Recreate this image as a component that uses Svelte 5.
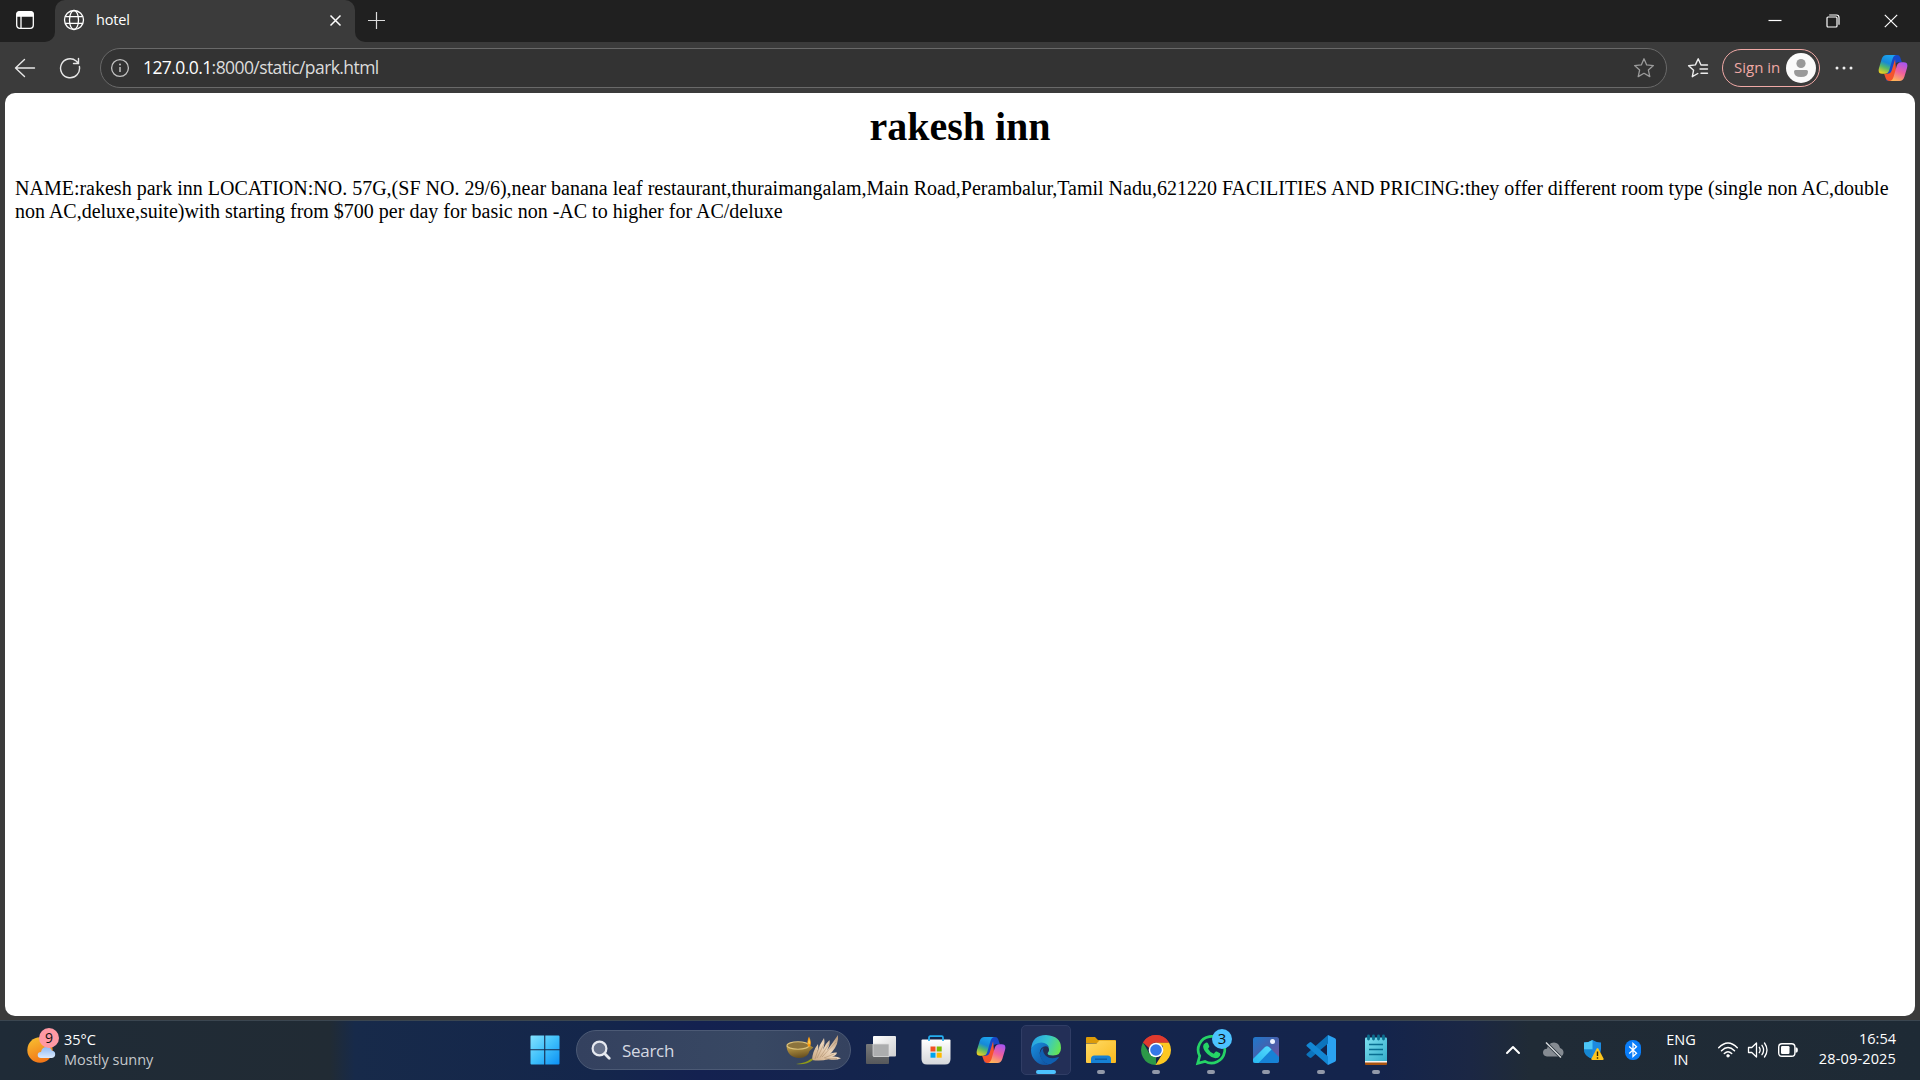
<script>
  const url = { host: '127.0.0.1', rest: ':8000/static/park.html' };
</script>

{#snippet copilot(id)}
  <svg width="30" height="28" viewBox="0 0 30 28">
    <defs>
      <linearGradient id="{id}a" x1="0.6" y1="0" x2="0.2" y2="1">
        <stop offset="0" stop-color="#1ca2ee" />
        <stop offset="0.4" stop-color="#1689d8" />
        <stop offset="0.65" stop-color="#52b86b" />
        <stop offset="1" stop-color="#f5d21c" />
      </linearGradient>
      <linearGradient id="{id}b" x1="0.7" y1="0" x2="0.3" y2="1">
        <stop offset="0" stop-color="#a855ee" />
        <stop offset="0.5" stop-color="#f0609c" />
        <stop offset="1" stop-color="#ffb657" />
      </linearGradient>
    </defs>
    <path d="M11 1h8q2.500 0 3.300 2.400l1.600 4.800h-3.500q-3 0-3.900 3l-3.400 11.500q-1.300 4-4.700 4z" fill="#1748c8" />
    <path d="M19 27h-8q-2.400 0-3.200-2.400l-1.700-4.800h3.500q3 0 4-3l3.500-11.600z" fill="#f4542c" />
    <path d="M8.500 1H18q-2.500.5-3.500 4l-3.300 11.200q-1.100 3.600-4.500 3.600H4.200Q-.5 19.800 1 14L3.700 5Q5 1 8.500 1z" fill="url(#{id}a)" />
    <path d="M21.500 27H12q2.500-.5 3.500-4l3.300-11.200q1.100-3.600 4.500-3.600h2.500q4.700 0 3.200 5.800L26.300 23q-1.300 4-4.800 4z" fill="url(#{id}b)" />
  </svg>
{/snippet}

<div class="screen">
  <header class="titlebar">
    <div class="tab-actions">
      <svg width="20" height="20" viewBox="0 0 20 20" fill="none" stroke="#fff" stroke-width="1.300">
        <rect x="1.700" y="1.700" width="16.600" height="16.600" rx="3" />
        <path d="M2 6V4q0-2 2-2h12q2 0 2 2v2z" fill="#fff" />
        <path d="M6 6v12" />
      </svg>
    </div>
    <div class="tab-well">
      <div class="tab">
        <svg width="22" height="22" viewBox="0 0 22 22" fill="none" stroke="#fff" stroke-width="1.300">
          <circle cx="11" cy="11" r="9.500" />
          <ellipse cx="11" cy="11" rx="4.500" ry="9.500" />
          <path d="M2.200 7.700h17.600M2.200 14.300h17.600" />
        </svg>
        <span class="tab-title">hotel</span>
        <svg class="tab-close" width="13" height="13" viewBox="0 0 13 13" stroke="#fff" stroke-width="1.500">
          <path d="M1.500 1.500l10 10M11.500 1.500l-10 10" />
        </svg>
      </div>
    </div>
    <div class="titlebar-rest">
      <svg width="19" height="19" viewBox="0 0 19 19" stroke="#ddd" stroke-width="1.200">
        <path d="M9.500 1v17M1 9.500h17" />
      </svg>
      <div class="window-buttons">
        <svg width="14" height="14" viewBox="0 0 14 14"><path d="M.5 6.500h13" stroke="#fff" stroke-width="1.200" /></svg>
        <svg width="14" height="14" viewBox="0 0 14 14" fill="none" stroke="#fff" stroke-width="1.200">
          <rect x="1" y="3" width="10" height="10" rx="1" />
          <path d="M3.200 1h7.300Q13 1 13 3.500v7.300" />
        </svg>
        <svg width="14" height="14" viewBox="0 0 14 14"><path d="M.8.8l12.400 12.400M13.200.8L.8 13.200" stroke="#fff" stroke-width="1.200" /></svg>
      </div>
    </div>
  </header>

  <nav class="toolbar">
    <svg class="back" width="22" height="22" viewBox="0 0 22 22" fill="none" stroke="#e8e8e8" stroke-width="1.400" stroke-linecap="round" stroke-linejoin="round">
      <path d="M20.500 11H1.500M10.500 2.500L1.500 11l9 8.500" />
    </svg>
    <svg class="reload" width="22" height="22" viewBox="0 0 22 22" fill="none" stroke="#e8e8e8" stroke-width="1.400" stroke-linecap="round">
      <path d="M20.400 9.500A9.500 9.500 0 1 1 17.200 4L19.500 6.500M19.500 1.500v5h-5" />
    </svg>
    <div class="address">
      <svg width="20" height="20" viewBox="0 0 20 20" fill="none" stroke="#c2c2c2" stroke-width="1.300">
        <circle cx="10" cy="10" r="8.400" />
        <path d="M10 9v5" stroke-width="1.500" />
        <circle cx="10" cy="6.500" r="1" fill="#c2c2c2" stroke="none" />
      </svg>
      <span class="url"><b>{url.host}</b>{url.rest}</span>
      <svg class="star" width="22" height="22" viewBox="0 0 22 22" fill="none" stroke="#9b9b9b" stroke-width="1.300" stroke-linejoin="round">
        <path d="M11 1.800l2.700 6.100 6.700.7-5 4.500 1.400 6.500-5.800-3.300-5.800 3.300 1.400-6.500-5-4.500 6.700-.7z" />
      </svg>
    </div>
    <svg class="favorites" width="22" height="22" viewBox="0 0 22 22" fill="none" stroke="#ededed" stroke-width="1.400" stroke-linejoin="round" stroke-linecap="round">
      <path d="M20.500 8H14l-2.800-6.200L8.400 7.900l-6.800.8 5 4.500-1.300 6.500 5.500-3.200M13 12h7.500M14 16.300h6.500" />
    </svg>
    <div class="signin">
      <span>Sign in</span>
      <svg width="30" height="30" viewBox="0 0 30 30">
        <circle cx="15" cy="15" r="15" fill="#fafafa" />
        <circle cx="15" cy="10.500" r="4.600" fill="#999" />
        <path d="M9.500 17h11q1.500 0 1.500 1.500 0 5.500-7 5.500t-7-5.500Q8 17 9.500 17z" fill="#999" />
      </svg>
    </div>
    <svg class="more" width="18" height="4" viewBox="0 0 18 4" fill="#eee">
      <circle cx="2" cy="2" r="1.500" /><circle cx="9" cy="2" r="1.500" /><circle cx="16" cy="2" r="1.500" />
    </svg>
    <div class="copilot">{@render copilot('bar')}</div>
  </nav>

  <main class="page">
    <h1>rakesh inn</h1>
    <p>NAME:rakesh park inn LOCATION:NO. 57G,(SF NO. 29/6),near banana leaf restaurant,thuraimangalam,Main Road,Perambalur,Tamil Nadu,621220 FACILITIES AND PRICING:they offer different room type (single non AC,double non AC,deluxe,suite)with starting from $700 per day for basic non -AC to higher for AC/deluxe</p>
  </main>

  <footer class="taskbar">
    <div class="weather">
      <div class="weather-icon">
        <svg width="36" height="38" viewBox="0 0 36 38">
          <defs>
            <linearGradient id="sun" x1="0" y1="0" x2="0.4" y2="1"><stop offset="0" stop-color="#f8c332" /><stop offset="1" stop-color="#f27818" /></linearGradient>
            <linearGradient id="cloud" x1="0" y1="0" x2="0" y2="1"><stop offset="0" stop-color="#8fbaf5" /><stop offset="1" stop-color="#dbe9fb" /></linearGradient>
          </defs>
          <circle cx="14" cy="22" r="12.700" fill="url(#sun)" />
          <path d="M15 30q-3.300 0-3.300-3t3.300-3q1-5 5.500-5t5.200 3.500q3.500.5 3.500 3.700T26 30z" fill="url(#cloud)" />
        </svg>
        <span class="badge news">9</span>
      </div>
      <div class="weather-text">
        <span>35°C</span>
        <span class="muted">Mostly sunny</span>
      </div>
    </div>

    <div class="apps">
      <svg class="start" width="30" height="30" viewBox="0 0 30 30">
        <defs><linearGradient id="win" x1="0" y1="0" x2="1" y2="1"><stop offset="0" stop-color="#84e2ff" /><stop offset="0.5" stop-color="#3fc0fb" /><stop offset="1" stop-color="#0c90f5" /></linearGradient></defs>
        <path d="M1.500.5H14.200V14.200H.5V1.500q0-1 1-1zM15.300.5H28.500q1 0 1 1V14.200H15.300zM.5 15.300H14.200V29.500H1.500q-1 0-1-1zM15.300 15.300H29.500V28.500q0 1-1 1H15.300z" fill="url(#win)" />
      </svg>

      <div class="search">
        <svg width="20" height="20" viewBox="0 0 20 20" fill="none" stroke="#e6e9f0" stroke-width="2.200" stroke-linecap="round">
          <circle cx="8.500" cy="8.500" r="6.900" fill="#66718a" /><path d="M13.800 13.800l4.400 4.400" stroke-width="2.800" />
        </svg>
        <span>Search</span>
        <svg class="lamp" width="56" height="32" viewBox="0 0 56 32">
          <defs>
            <linearGradient id="bowl" x1="0" y1="0" x2="0.3" y2="1"><stop offset="0" stop-color="#c9a850" /><stop offset="1" stop-color="#6b5220" /></linearGradient>
            <linearGradient id="leaf" x1="1" y1="0" x2="0" y2="1"><stop offset="0" stop-color="#a98a6c" /><stop offset="0.5" stop-color="#ecd5bb" /><stop offset="1" stop-color="#c9a781" /></linearGradient>
          </defs>
          <path d="M.5 12Q1.500 23.500 13 24q9-.5 10.500-7l4-3.500-4.500-2.500z" fill="url(#bowl)" />
          <ellipse cx="12" cy="11.500" rx="11" ry="3.700" fill="#8c743d" stroke="#dcc27a" stroke-width="1.100" />
          <path d="M22 12.500q-1.500-5 1-10 3 6 1.200 10z" fill="#f99c12" />
          <path d="M22.800 10q-.8-2.500.3-5 1 2.800.4 5z" fill="#ffe36a" />
          <path d="M26 26q.5-9 6-16 .8 4-.500 8 1.500-7 6.500-14 1.300 5-1 11.500 2.500-6 6.500-9.500 1 4-2.500 10.500Q46.500 9 52 1q1 9-6 17-2 2-3 2.500 3-2.500 8-2-.5 3-5 4.200 4.500-.7 9 1.600-5 2.500-12.500 1-8 2-16.500.7z" fill="url(#leaf)" />
          <path d="M29 25l3-9M31 24l7-14M34 23.500L43 10M36 23L50 8M38 24l10-4M39 25l12-.5" fill="none" stroke="#a58462" stroke-width=".5" />
          <path d="M10 30q10-1 15.500-5.500 2 .500 1 1.700-6 5-16.500 3.800z" fill="#8f9a18" />
        </svg>
      </div>

      <div class="app">
        <svg width="32" height="30" viewBox="0 0 32 30">
          <defs>
            <linearGradient id="tvf" x1="0" y1="0" x2="1" y2="1"><stop offset="0" stop-color="#fff" /><stop offset="1" stop-color="#cfcfd0" /></linearGradient>
            <linearGradient id="tvb" x1="0" y1="0" x2="0" y2="1"><stop offset="0" stop-color="#77797b" /><stop offset="1" stop-color="#56585b" /></linearGradient>
          </defs>
          <rect x="1" y="9" width="23" height="20" rx="1" fill="url(#tvb)" />
          <rect x="8" y="1" width="23" height="20.500" rx="1" fill="url(#tvf)" />
          <path d="M8 9h16v12.500H9q-1 0-1-1z" fill="#acadae" stroke="#dcdcdc" stroke-width=".7" />
        </svg>
      </div>

      <div class="app">
        <svg width="30" height="30" viewBox="0 0 30 30">
          <defs><linearGradient id="bag" x1="0" y1="0" x2="0" y2="1"><stop offset="0" stop-color="#fff" /><stop offset="1" stop-color="#d5d7da" /></linearGradient></defs>
          <path d="M1.500 4.500h27q1 0 1 1V24q0 5.500-5.500 5.500H6Q.5 29.500.5 24V5.500q0-1 1-1z" fill="url(#bag)" />
          <path d="M8 6V2.500Q8 1.200 9.300 1.200h11.400q1.300 0 1.300 1.300V6" fill="none" stroke="#25aef0" stroke-width="1.700" />
          <path d="M9.500 11.500h5v5h-5z" fill="#f25022" /><path d="M15.700 11.500h5v5h-5z" fill="#7fba00" />
          <path d="M9.500 17.700h5v5h-5z" fill="#00a4ef" /><path d="M15.700 17.700h5v5h-5z" fill="#ffb900" />
        </svg>
      </div>

      <div class="app">{@render copilot('task')}</div>

      <div class="app current">
        <svg width="30" height="30" viewBox="0 0 30 30">
          <defs>
            <linearGradient id="edgeTop" x1="0" y1="0.300" x2="1" y2="0.600"><stop offset="0" stop-color="#279fe4" /><stop offset="0.5" stop-color="#36c6cd" /><stop offset="1" stop-color="#66e552" /></linearGradient>
            <linearGradient id="edgeLow" x1="0" y1="0" x2="1" y2="1"><stop offset="0" stop-color="#1890df" /><stop offset="1" stop-color="#114d9b" /></linearGradient>
          </defs>
          <path d="M.2 14Q1 0 15 0q15 1 15 13 0 7.500-8 7.500-6 0-5.300-2.500 1.800-1.500 1.300-4-1-5-7-5.500Q4 8.500.2 14z" fill="url(#edgeTop)" />
          <path d="M.1 14Q3 7.500 10.500 7.500q6 .5 7.500 5-4-2.500-7.500.500-3 3.500-1 8.500 2.500 6.500 9 8-9 2-14.500-4Q-.5 21 .1 14z" fill="url(#edgeLow)" />
          <path d="M12.500 12.500q-6 5-2 11.500 3.500 5.500 9 5.300Q25 27 28 22.500q-.5-.800-1.300-.300-7 2.800-11.700-1.200-4-4-2.500-8.500z" fill="#0f5fb1" />
        </svg>
        <i></i>
      </div>

      <div class="app running">
        <svg width="32" height="30" viewBox="0 0 32 30">
          <defs><linearGradient id="fold" x1="0" y1="0" x2="1" y2="1"><stop offset="0" stop-color="#ffdb67" /><stop offset="1" stop-color="#fab91c" /></linearGradient></defs>
          <path d="M1 8V3q0-1 1-1h8l3 3h17q1 0 1 1v3z" fill="#dd9b08" />
          <path d="M1 8.500h10.500l3-3H30q1 0 1 1V27q0 1-1 1H2q-1 0-1-1z" fill="url(#fold)" />
          <path d="M6 28v-4q0-3.500 3.500-3.500h13Q26 20.500 26 24v4z" fill="#1681d4" />
          <path d="M10 24.200h12" stroke="#0a58a0" stroke-width="1.300" />
        </svg>
        <i></i>
      </div>

      <div class="app running">
        <svg width="30" height="30" viewBox="0 0 30 30">
          <path d="M2 7.500Q6.500 0 15 0t13 7.500H15z" fill="#df3a2e" />
          <path d="M2 7.500L8.500 18.750 15 22.500 15 30Q6 30 2 22.500T2 7.500z" fill="#2c9948" />
          <path d="M28 7.500Q32 15 28 22.500 23.500 30 14.500 30l7-11.250L22 11 15 7.500z" fill="#fdc821" />
          <path d="M2 7.500Q6.500 0 15 0t13 7.500H15q-5 0-7 5.500z" fill="#df3a2e" />
          <circle cx="15" cy="15" r="7.300" fill="#fff" /><circle cx="15" cy="15" r="5.800" fill="#3478e9" />
        </svg>
        <i></i>
      </div>

      <div class="app running">
        <svg width="32" height="32" viewBox="0 0 32 32">
          <path d="M2.700 29.300l2-7.300A13.300 13.300 0 1 1 10 27.400z" fill="none" stroke="#25d366" stroke-width="2.700" />
          <path d="M10.800 8.800q1.400-.8 2.300.7l1.200 2.800q.2.800-1.300 2.400 1.900 3.600 5.800 5.100l1.700-2q.6-.5 1.300-.2l3.200 1.600q.8.800 0 2.500-1.300 2.500-4.600 2.500-4.200-.5-8-4.200-4.300-4.400-4.300-7.800 0-2.200 2.700-3.400z" fill="#25d366" />
        </svg>
        <span class="badge chats">3</span>
        <i></i>
      </div>

      <div class="app running">
        <svg width="28" height="28" viewBox="0 0 28 28">
          <defs>
            <linearGradient id="sky" x1="0" y1="0" x2="1" y2="1"><stop offset="0" stop-color="#1e78cc" /><stop offset="0.5" stop-color="#4661ad" /><stop offset="1" stop-color="#7d529e" /></linearGradient>
            <linearGradient id="hill" x1="0" y1="1" x2="1" y2="0"><stop offset="0" stop-color="#27b7ef" /><stop offset="1" stop-color="#56dcff" /></linearGradient>
          </defs>
          <rect x="1" y="1" width="26" height="26" rx="2.500" fill="url(#sky)" />
          <path d="M1 23L13 11q2-1.500 4 0l10 10v3.500q0 2.500-2.500 2.500h-21Q1 27 1 24.500z" fill="#1682d6" />
          <path d="M1 23L13 11q2-1.500 4 0l2.500 2.500L6.500 27h-3Q1 27 1 24.500z" fill="url(#hill)" />
          <circle cx="20.500" cy="5.500" r="2.500" fill="#eef3ff" />
        </svg>
        <i></i>
      </div>

      <div class="app running">
        <svg width="30" height="30" viewBox="0 0 30 30">
          <path d="M22 0l7 3.200q1 .5 1 1.700v20.200q0 1.200-1 1.700L22 30l-1-7V7z" fill="#2ba2f1" />
          <path d="M22 0v8.500L5.500 22.500q-1 .8-2 0L1 20.500q-1.200-1 0-2z" fill="#0c74bd" />
          <path d="M22 30v-8.500L5.500 7.500q-1-.8-2 0L1 9.500q-1.200 1 0 2z" fill="#1387d4" />
        </svg>
        <i></i>
      </div>

      <div class="app running">
        <svg width="24" height="32" viewBox="0 0 24 32">
          <defs><linearGradient id="note" x1="0" y1="0" x2="1" y2="1"><stop offset="0" stop-color="#7cdff0" /><stop offset="1" stop-color="#35aecb" /></linearGradient></defs>
          <path d="M1 26h22v4q0 1-1 1H2q-1 0-1-1z" fill="#a9530f" />
          <path d="M1 25h22v3.500H1z" fill="#f3f4f4" />
          <path d="M2 3.500h20q1 0 1 1V27H1V4.500q0-1 1-1z" fill="url(#note)" />
          <path d="M5 10.500h14M5 15.500h14M5 20.500h14" stroke="#086e91" stroke-width="1.700" />
          <path d="M4.500 2v3M9.500 2v3M14.500 2v3M19.500 2v3" stroke="#0c6f90" stroke-width="2.800" stroke-linecap="round" />
        </svg>
        <i></i>
      </div>
    </div>

    <div class="tray">
      <div class="tray-cell">
        <svg width="16" height="10" viewBox="0 0 16 10" fill="none" stroke="#fff" stroke-width="2" stroke-linecap="round" stroke-linejoin="round"><path d="M2 8l6-6 6 6" /></svg>
      </div>
      <div class="tray-cell">
        <svg width="22" height="18" viewBox="0 0 22 18">
          <path d="M5 15.500q-4-.5-4-4T5 7.800q1-6 7-6.300 5 .2 6 5.500 3.500 1 3.500 4.500T18 15.500z" fill="#858b92" />
          <path d="M4 1.500L19 16.500" stroke="#1f2a34" stroke-width="3" /><path d="M4 1.500L19 16.500" stroke="#d6d9dc" stroke-width="1.500" />
        </svg>
      </div>
      <div class="tray-cell">
        <svg width="22" height="22" viewBox="0 0 22 22">
          <path d="M10.500 1q4 2.500 8.500 2.500V10q0 7-8.500 10Q2 17 2 10V3.500q4.500 0 8.500-2.500z" fill="#1c8ae0" />
          <path d="M10.500 1v9.500H2v-7q4.500 0 8.500-2.500z" fill="#4cc6f6" />
          <path d="M10.500 10.500V20Q2 17 2 10.500z" fill="#1687d1" />
          <path d="M14.700 9.500q.8-1 1.600 0l5.200 10q.5 1.500-.8 1.500H10.300q-1.300 0-.8-1.500z" fill="#fdc51c" />
          <path d="M15.500 12.500v4.500M15.500 18.300v1.400" stroke="#332500" stroke-width="1.400" />
        </svg>
      </div>
      <div class="tray-cell">
        <svg width="16" height="20" viewBox="0 0 16 20">
          <rect width="16" height="20" rx="7.500" fill="#0a7df8" />
          <path d="M4.200 6.500l7.300 6.800L8 16.500v-13l3.500 3.200-7.300 6.800" fill="none" stroke="#fff" stroke-width="1.300" />
        </svg>
      </div>
      <div class="language"><span>ENG</span><span>IN</span></div>
      <div class="status">
        <svg width="22" height="18" viewBox="0 0 22 18" fill="none" stroke="#fff" stroke-width="1.500" stroke-linecap="round">
          <path d="M1.700 6.800Q11-2.800 20.300 6.800M4.500 9.700q6.500-6.400 13 0M7.300 12.500q3.700-3.500 7.400 0" />
          <circle cx="11" cy="14.800" r="1.400" fill="#fff" stroke-width=".5" />
        </svg>
        <svg width="22" height="18" viewBox="0 0 22 18" fill="none" stroke="#fff" stroke-width="1.300" stroke-linejoin="round" stroke-linecap="round">
          <path d="M1.500 6.500h3.300L9.500 2v14l-4.700-4.500H1.500zM12.300 6.300q1.700 2.700 0 5.400M15 4.300q3.200 4.700 0 9.400M17.500 2q5 7 0 14" />
        </svg>
        <svg width="22" height="16" viewBox="0 0 22 16" fill="none" stroke="#fff" stroke-width="1.400">
          <rect x="1.700" y="1.700" width="16.200" height="12.600" rx="3.300" />
          <rect x="4" y="4" width="8.500" height="8" rx="1.200" fill="#fff" stroke="none" />
          <path d="M18.500 5.300q2.300 0 2.300 1.700v2q0 1.700-2.300 1.700z" fill="#fff" stroke="none" />
        </svg>
      </div>
      <div class="clock"><span class="time">16:54</span><span class="date">28-09-2025</span></div>
    </div>
  </footer>
</div>

<style>
  :global(body) { margin: 0; background: #3b3b3b; }
  .screen {
    box-sizing: border-box;
    width: 1920px;
    height: 1080px;
    display: flex;
    flex-direction: column;
    overflow: hidden;
    background: #3b3b3b;
    font-family: "Open Sans", "Noto Sans", sans-serif;
    color: #fff;
    white-space: nowrap;
  }
  svg { display: block; flex: none; }

  .titlebar { display: flex; height: 42px; flex: none; }
  .tab-actions {
    width: 40px;
    padding-left: 15px;
    display: flex;
    align-items: center;
    background: #202020;
    border-bottom-right-radius: 10px;
  }
  .tab-actions, .titlebar-rest { height: 40px; padding-bottom: 2px; }
  .tab-well { width: 300px; background: linear-gradient(#202020 50%, #3b3b3b 50%); }
  .tab {
    box-sizing: border-box;
    height: 42px;
    padding: 0 13px 2px 8px;
    display: flex;
    align-items: center;
    background: #3b3b3b;
    border-radius: 10px 10px 0 0;
  }
  .tab-title { margin-left: 11px; padding-bottom: 2px; font-size: 14.500px; letter-spacing: -0.200px; }
  .tab-close { margin-left: auto; }
  .titlebar-rest {
    flex: 1;
    padding-left: 12px;
    padding-right: 22px;
    display: flex;
    align-items: center;
    justify-content: space-between;
    background: #202020;
    border-bottom-left-radius: 10px;
  }
  .window-buttons { display: flex; gap: 44px; padding-top: 2px; }

  .toolbar { height: 51px; flex: none; display: flex; align-items: center; }
  .back { margin-left: 14px; }
  .reload { margin-left: 23px; }
  .address {
    box-sizing: border-box;
    width: 1567px;
    height: 40px;
    margin-left: 19px;
    padding: 0 11px 0 9px;
    display: flex;
    align-items: center;
    border: 1px solid #696969;
    border-radius: 20px;
    background: #333;
  }
  .url { margin-left: 13px; padding-bottom: 2px; font-size: 17.500px; letter-spacing: -0.580px; color: #dcdcdc; }
  .url b { font-weight: 400; color: #fff; }
  .star { margin-left: auto; }
  .favorites { margin-left: 20px; }
  .signin {
    box-sizing: border-box;
    width: 98px;
    height: 38px;
    margin-left: 13px;
    padding: 0 3px 0 11px;
    display: flex;
    align-items: center;
    justify-content: space-between;
    border: 1px solid #f0a9a6;
    border-radius: 19px;
    color: #f0a9a6;
    font-size: 15px;
  }
  .signin span { padding-bottom: 1px; }
  .more { margin-left: 15px; }
  .copilot { margin-left: 25px; }

  .page {
    box-sizing: border-box;
    height: 923px;
    flex: none;
    margin: 0 5px;
    padding: 11px 10px 10px;
    border-radius: 10px;
    background: #fff;
    color: #000;
    font-family: "Liberation Serif", "Times New Roman", serif;
    font-size: 20px;
    line-height: 23px;
    white-space: normal;
  }
  .page h1 { margin: 0 0 27px; font-size: 40px; line-height: 46px; text-align: center; }
  .page p { margin: 0; }

  .taskbar {
    box-sizing: border-box;
    height: 60px;
    flex: none;
    margin-top: 4px;
    padding-bottom: 1px;
    display: flex;
    align-items: stretch;
    border-top: 1px solid #3b4650;
    background: linear-gradient(90deg, #1f2b37 0, #212b34 330px, #172a4a 355px, #14264b 600px, #142150 700px, #14254c 900px, #14244c 1380px, #1b2744 1470px, #202b36 1530px, #1e2a35 100%);
  }
  .weather { width: 503px; padding-left: 26px; display: flex; align-items: center; }
  .weather-icon { position: relative; margin-top: -7px; }
  .badge {
    position: absolute;
    width: 20px;
    height: 20px;
    border-radius: 50%;
    color: #101010;
    font-size: 14px;
    line-height: 19px;
    text-align: center;
  }
  .news { left: 13px; top: 0; background: #ff99a4; }
  .chats { left: 29px; top: 8px; background: #4cc2ff; font-size: 15px; }
  .weather-text { margin-left: 2px; margin-top: -1px; display: flex; flex-direction: column; font-size: 14.500px; line-height: 20px; }
  .muted { color: #c4c8cc; }

  .apps { display: flex; align-items: center; }
  .start { margin-left: 1px; }
  .search {
    box-sizing: border-box;
    width: 275px;
    height: 40px;
    margin: 0 2px 0 16px;
    padding: 0 8px 0 14px;
    display: flex;
    align-items: center;
    border: 1px solid #4c5a75;
    border-radius: 20px;
    background: linear-gradient(90deg, #34415f, #384863 65%, #35425f);
    color: #d5d9e2;
    font-size: 17px;
  }
  .search span { margin-left: 11px; letter-spacing: -0.300px; }
  .lamp { margin-left: auto; }
  .app {
    position: relative;
    width: 55px;
    height: 58px;
    display: flex;
    align-items: center;
    justify-content: center;
  }
  .app.current { box-sizing: border-box; width: 50px; height: 50px; margin: 0 2.500px; border: 1px solid #303d65; border-radius: 5px; background: #232f57; }
  .app i { position: absolute; bottom: 5px; left: 50%; width: 8px; height: 4px; border-radius: 2px; background: #9299a9; transform: translateX(-50%); }
  .app.current i { bottom: 0; width: 20px; background: #4cc2ff; }

  .tray { margin-left: auto; padding-right: 24px; display: flex; align-items: center; font-size: 14.500px; line-height: 20px; }
  .tray-cell { width: 40px; display: flex; justify-content: center; }
  .language { width: 56px; margin-top: -1px; display: flex; flex-direction: column; align-items: center; }
  .status { display: flex; align-items: center; gap: 8px; margin-left: 8px; }
  .clock { width: 97px; margin-top: -2px; display: flex; flex-direction: column; align-items: flex-end; }
  .date { letter-spacing: 0.150px; }
</style>
